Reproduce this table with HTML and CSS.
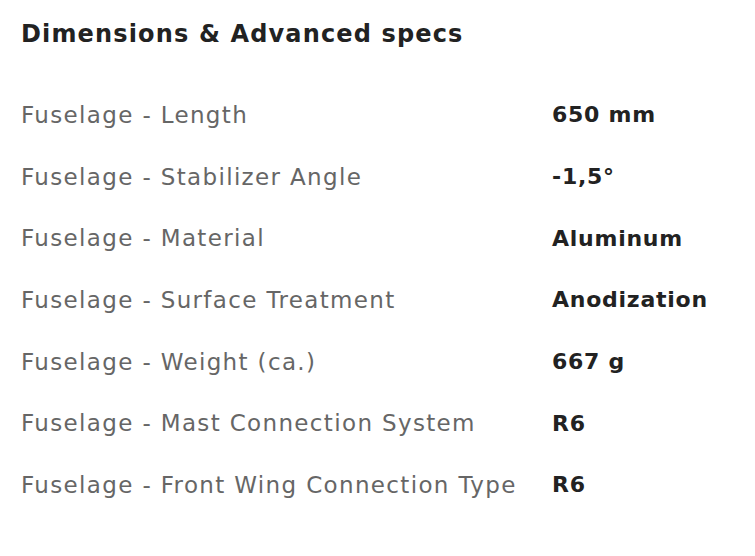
FILE: index.html
```html
<!DOCTYPE html>
<html lang="en">
<head>
<meta charset="utf-8">
<title>Dimensions &amp; Advanced specs</title>
<link rel="stylesheet" href="styles.css">
</head>
<body>
<section class="specs">
  <h2 class="specs-title">Dimensions &amp; Advanced specs</h2>
  <dl class="specs-list">
    <div class="spec-row"><dt class="spec-label">Fuselage - Length</dt><dd class="spec-value">650 mm</dd></div>
    <div class="spec-row"><dt class="spec-label">Fuselage - Stabilizer Angle</dt><dd class="spec-value">-1,5°</dd></div>
    <div class="spec-row"><dt class="spec-label">Fuselage - Material</dt><dd class="spec-value">Aluminum</dd></div>
    <div class="spec-row"><dt class="spec-label">Fuselage - Surface Treatment</dt><dd class="spec-value">Anodization</dd></div>
    <div class="spec-row"><dt class="spec-label">Fuselage - Weight (ca.)</dt><dd class="spec-value">667 g</dd></div>
    <div class="spec-row"><dt class="spec-label">Fuselage - Mast Connection System</dt><dd class="spec-value">R6</dd></div>
    <div class="spec-row"><dt class="spec-label">Fuselage - Front Wing Connection Type</dt><dd class="spec-value">R6</dd></div>
  </dl>
</section>
</body>
</html>
```

FILE: styles.css
```css
html, body {
  margin: 0;
  padding: 0;
  background: #ffffff;
}

body {
  font-family: "DejaVu Sans", "Open Sans", sans-serif;
}

.specs {
  padding: 19px 21px 0 21px;
}

.specs-title {
  margin: 0 0 35px 0;
  font-size: 24px;
  line-height: 30px;
  font-weight: 700;
  letter-spacing: 1.15px;
  color: #222222;
}

.specs-list {
  margin: 0;
}

.spec-row {
  display: grid;
  grid-template-columns: 531px 1fr;
  height: 61.7px;
  align-items: center;
}

.spec-label {
  font-size: 23px;
  letter-spacing: 1.35px;
  color: #666666;
  margin: 0;
}

.spec-value {
  margin: 0;
  font-size: 22px;
  font-weight: 700;
  letter-spacing: 0.75px;
  color: #222222;
}
```
